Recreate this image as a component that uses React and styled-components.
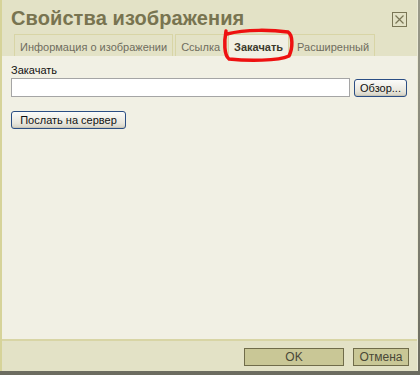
import React from "react";
import styled, { createGlobalStyle } from "styled-components";

const Global = createGlobalStyle`
  html, body { margin: 0; padding: 0; background: #ffffff; }
  body { font-family: "Liberation Sans", Arial, sans-serif; }
`;

const Frame = styled.div`
  width: 420px;
  height: 375px;
  position: relative;
  overflow: hidden;
  background: linear-gradient(#9a9a8a, #6c6c60);
`;

const Dialog = styled.div`
  width: 418px;
  height: 371px;
  display: flex;
  flex-direction: column;
  box-sizing: border-box;
  border-left: 2px solid #d6d399;
  border-right: 1px solid #ecebd6;
  background: #e3e2c6;
`;

const Header = styled.div`
  display: flex;
  flex-direction: column;
`;

const TitleRow = styled.div`
  height: 34px;
  display: flex;
  align-items: center;
  justify-content: space-between;
  padding: 0 10px 0 9px;
`;

const Title = styled.h1`
  margin: 0;
  font-family: "Liberation Sans", Arial, sans-serif;
  font-weight: bold;
  font-size: 20px;
  color: #787450;
  letter-spacing: 0.1px;
  padding-top: 2px;
`;

const CloseBox = styled.div`
  width: 13px;
  height: 13px;
  border: 1px solid #7a7656;
  display: flex;
  align-items: center;
  justify-content: center;
  margin-top: 4px;
`;

const Tabs = styled.div`
  display: flex;
  height: 22px;
  padding-left: 12px;
  gap: 2px;
  align-items: stretch;
`;

const Tab = styled.div`
  box-sizing: border-box;
  padding: 2px 5px 0;
  display: flex;
  align-items: center;
  font-size: 11px;
  font-family: "Liberation Sans", Arial, sans-serif;
  border: 1px solid #d8d5a6;
  border-bottom: none;
  color: ${(p) => (p.$active ? "#3c3a2c" : "#6f6d5e")};
  font-weight: ${(p) => (p.$active ? "bold" : "normal")};
  background: ${(p) => (p.$active ? "#f1f0e4" : "#e3e2c6")};
`;

const Body = styled.div`
  flex: 1;
  background: #f1f0e4;
  padding: 7px 10px 0 9px;
  display: flex;
  flex-direction: column;
`;

const Label = styled.div`
  font-size: 11px;
  color: #111;
  height: 15px;
  line-height: 15px;
`;

const FieldRow = styled.div`
  display: flex;
  align-items: center;
  gap: 4px;
`;

const TextInput = styled.div`
  width: 340px;
  height: 19px;
  box-sizing: border-box;
  border: 1px solid #a5a5a5;
  background: #fff;
`;

const XpButton = styled.button`
  font-family: "Liberation Sans", Arial, sans-serif;
  font-size: 11px;
  color: #111;
  height: 18px;
  box-sizing: border-box;
  padding: 0 5px;
  border: 1px solid #2b4e84;
  border-radius: 3px;
  background: linear-gradient(#fbfbf9, #e8e6dc 70%, #d4d1c4);
  box-shadow: inset 0 -1px 0 #c9c6b6;
  width: ${(p) => p.$w}px;
  margin-top: ${(p) => p.$mt || 0}px;
  line-height: 14px;
`;

const Footer = styled.div`
  height: 32px;
  border-top: 2px solid #d8d5a5;
  display: flex;
  align-items: center;
  justify-content: flex-end;
  gap: 9px;
  padding-right: 8px;
  box-sizing: border-box;
`;

const FooterButton = styled.button`
  font-family: "Liberation Sans", Arial, sans-serif;
  font-size: 12px;
  color: #4a4838;
  background: #c9c796;
  border: 1px solid #706c4a;
  height: 18px;
  width: ${(p) => p.$w}px;
  padding: 0;
  margin-top: 2px;
`;

const Scribble = styled.svg`
  position: absolute;
  left: 218px;
  top: 26px;
  width: 80px;
  height: 40px;
  pointer-events: none;
`;

export default function App() {
  return (
    <Frame>
      <Global />
      <Dialog>
        <Header>
          <TitleRow>
            <Title>Свойства изображения</Title>
            <CloseBox>
              <svg width="11" height="11" viewBox="0 0 11 11">
                <path d="M1.5 1.5 L9.5 9.5 M9.5 1.5 L1.5 9.5" stroke="#7a7656" strokeWidth="1.2" />
              </svg>
            </CloseBox>
          </TitleRow>
          <Tabs>
            <Tab>Информация о изображении</Tab>
            <Tab>Ссылка</Tab>
            <Tab $active>Закачать</Tab>
            <Tab>Расширенный</Tab>
          </Tabs>
        </Header>
        <Body>
          <Label>Закачать</Label>
          <FieldRow>
            <TextInput />
            <XpButton $w={53}>Обзор...</XpButton>
          </FieldRow>
          <XpButton $w={115} $mt={14}>Послать на сервер</XpButton>
        </Body>
        <Footer>
          <FooterButton $w={100}>OK</FooterButton>
          <FooterButton $w={56}>Отмена</FooterButton>
        </Footer>
      </Dialog>
      <Scribble viewBox="0 0 80 40">
        <path
          d="M9 8 C 28 3, 55 4, 70 6 C 75 9, 75 22, 71 30 C 60 35, 30 35, 11 33 C 6 29, 6 16, 8 5"
          fill="none"
          stroke="#ee1111"
          strokeWidth="3.5"
          strokeLinecap="round"
        />
      </Scribble>
    </Frame>
  );
}
